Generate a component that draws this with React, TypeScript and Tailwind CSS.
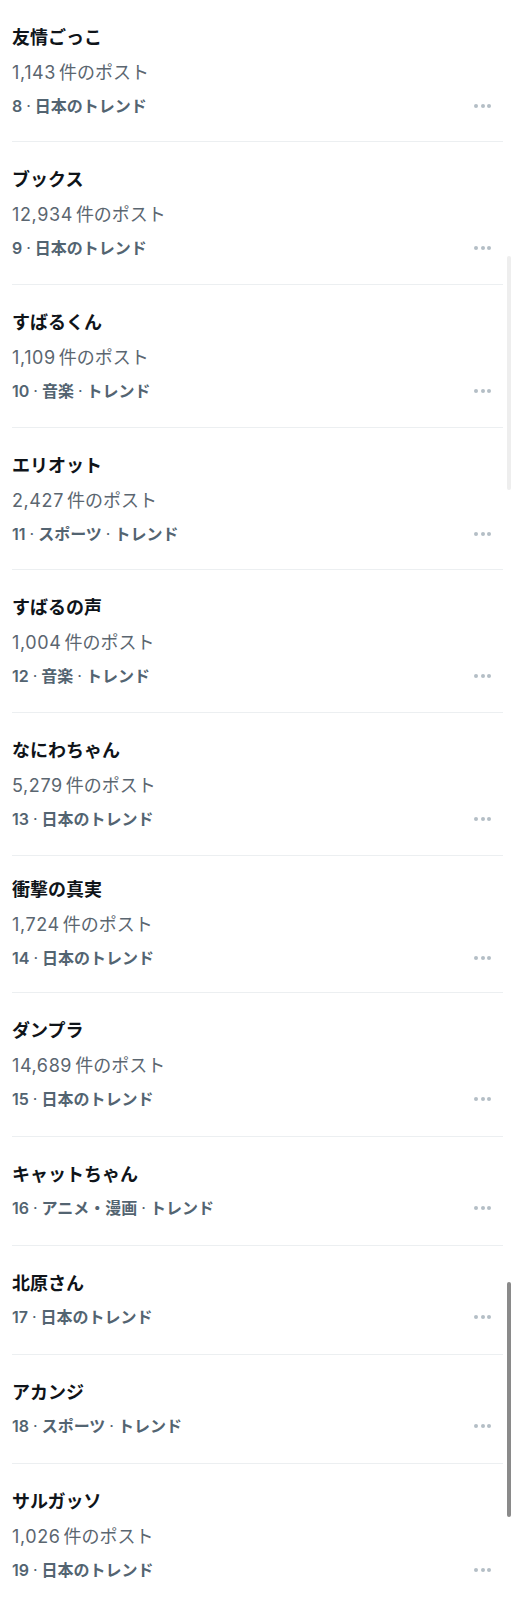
import React from "react";

interface Trend {
    title: string;
    posts?: string;
    meta: string[];
    pad: string;
}

const trends: Trend[] = [
    { title: "友情ごっこ", posts: "1,143", meta: ["8", "日本のトレンド"], pad: "pt-[26px] pb-[24px]" },
    { title: "ブックス", posts: "12,934", meta: ["9", "日本のトレンド"], pad: "pt-[26px] pb-[25px]" },
    { title: "すばるくん", posts: "1,109", meta: ["10", "音楽", "トレンド"], pad: "pt-[26px] pb-[25px]" },
    { title: "エリオット", posts: "2,427", meta: ["11", "スポーツ", "トレンド"], pad: "pt-[26px] pb-[24px]" },
    { title: "すばるの声", posts: "1,004", meta: ["12", "音楽", "トレンド"], pad: "pt-[26px] pb-[25px]" },
    { title: "なにわちゃん", posts: "5,279", meta: ["13", "日本のトレンド"], pad: "pt-[26px] pb-[25px]" },
    { title: "衝撃の真実", posts: "1,724", meta: ["14", "日本のトレンド"], pad: "pt-[22px] pb-[23px]" },
    { title: "ダンプラ", posts: "14,689", meta: ["15", "日本のトレンド"], pad: "pt-[26px] pb-[26px]" },
    { title: "キャットちゃん", meta: ["16", "アニメ・漫画", "トレンド"], pad: "pt-[26px] pb-[26px]" },
    { title: "北原さん", meta: ["17", "日本のトレンド"], pad: "pt-[26px] pb-[26px]" },
    { title: "アカンジ", meta: ["18", "スポーツ", "トレンド"], pad: "pt-[26px] pb-[26px]" },
    { title: "サルガッソ", posts: "1,026", meta: ["19", "日本のトレンド"], pad: "pt-[26px] pb-[25px]" },
];

const MoreDots = () => (
    <div className="flex items-center gap-[2.5px] shrink-0">
        <span className="w-[4px] h-[4px] rounded-full bg-[#b4bec6]" />
        <span className="w-[4px] h-[4px] rounded-full bg-[#b4bec6]" />
        <span className="w-[4px] h-[4px] rounded-full bg-[#b4bec6]" />
    </div>
);

const App: React.FC = () => {
    return (
        <div className="relative w-[515px] min-h-[1600px] bg-white overflow-hidden font-['Inter','Noto_Sans_CJK_JP',sans-serif]">
            {/* Trend list */}
            <ul className="mx-3">
                {trends.map((t) => (
                    <li key={t.title} className={`border-b border-[#eceff1] pr-3 ${t.pad}`}>
                        <div className="text-[18px] leading-6 font-bold text-[#0f1419]">{t.title}</div>
                        {t.posts && (
                            <div className="mt-[11px] text-[18px] leading-6 text-[#5b6670]">
                                <span className="tracking-[0.6px]">{t.posts}</span>
                                <span className="ml-[3px]">件のポスト</span>
                            </div>
                        )}
                        <div className="mt-[10px] flex items-center justify-between">
                            <span className="flex items-center text-[16px] leading-[22px] font-semibold text-[#536471]">
                                {t.meta.map((m, i) => (
                                    <React.Fragment key={i}>
                                        {i > 0 && <span className="mx-[4px] font-normal">·</span>}
                                        <span>{m}</span>
                                    </React.Fragment>
                                ))}
                            </span>
                            <MoreDots />
                        </div>
                    </li>
                ))}
            </ul>

            {/* Scroll indicators */}
            <div className="absolute left-[507px] top-[256px] w-[4px] h-[234px] rounded-full bg-[#eeeeee]" />
            <div className="absolute left-[507px] top-[1282px] w-[4px] h-[235px] rounded-full bg-[#8a8a8a]" />
        </div>
    );
};

export default App;
